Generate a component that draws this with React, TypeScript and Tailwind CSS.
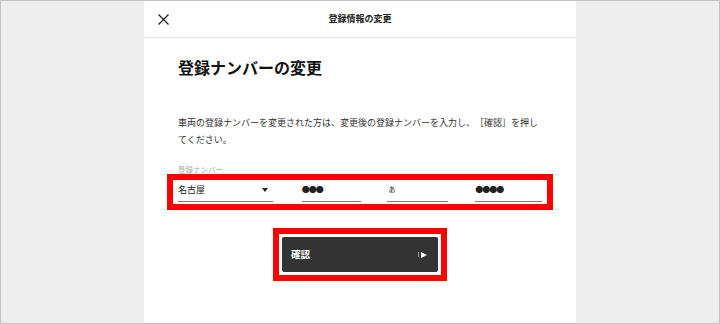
import React, { useState } from 'react';

const font = { fontFamily: '"Noto Sans CJK JP", "Noto Sans", sans-serif' };

const ChangePlate: React.FC = () => {
  const [area] = useState('名古屋');

  return (
    <div
      className="w-[720px] h-[324px] border border-[#c2c2c2] bg-[#eeeeee] flex justify-center overflow-hidden"
      style={font}
    >
      <div className="w-[432px] h-full bg-white flex flex-col">
        {/* header */}
        <div className="h-[37px] shrink-0 border-b border-[#e3e3e3] flex items-center relative">
          <button className="ml-[13px] w-[12px] h-[12px] flex items-center justify-center text-[#222]">
            <svg width="11" height="11" viewBox="0 0 11 11" fill="none" stroke="currentColor" strokeWidth="1.3">
              <path d="M0.5 0.5 L10.5 10.5 M10.5 0.5 L0.5 10.5" />
            </svg>
          </button>
          <div className="flex-1 text-center text-[9px] font-bold text-[#222] -ml-[25px]">登録情報の変更</div>
        </div>

        {/* body */}
        <div className="px-[34px] flex flex-col">
          <h1 className="mt-[18px] text-[16px] leading-[22px] font-bold text-[#111]">登録ナンバーの変更</h1>
          <p className="mt-[36px] text-[9px] leading-[17px] text-[#333] [text-spacing-trim:space-all]">
            車両の登録ナンバーを変更された方は、変更後の登録ナンバーを入力し、［確認］を押してください。
          </p>

          <div className="mt-[17px] text-[7.5px] leading-[10px] text-[#aaa]">登録ナンバー</div>

          <div className="relative mt-[3px]">
            <div className="flex items-end h-[24px] text-[#222]">
              <div className="w-[95px] h-full border-b border-[#777] flex items-center justify-between pr-[5px]">
                <span className="text-[9px] leading-none">{area}</span>
                <svg width="6" height="4" viewBox="0 0 6 4">
                  <path d="M0 0 H6 L3 4 Z" fill="#222" />
                </svg>
              </div>
              <div className="ml-[29px] w-[60px] h-full border-b border-[#777] flex items-center">
                <span className="text-[8px] leading-none tracking-[-1px]">●●●</span>
              </div>
              <div className="ml-[26px] w-[61px] h-full border-b border-[#777] flex items-center pl-[1px]">
                <span className="text-[7px] leading-none">あ</span>
              </div>
              <div className="ml-[27px] w-[67px] h-full border-b border-[#777] flex items-center">
                <span className="text-[8px] leading-none tracking-[-1px]">●●●●</span>
              </div>
            </div>
            {/* annotation frame */}
            <div className="absolute left-[-11px] right-[-11px] top-[-4px] bottom-[-8px] border-[6px] border-[#ff0000] pointer-events-none" />
          </div>

          <div className="flex justify-center mt-[26px]">
            <div className="border-[6px] border-[#ff0000] p-[3px]">
              <button className="w-[156px] h-[35px] bg-[#333333] rounded-[2px] flex items-center justify-between px-[9px] text-white">
                <span className="text-[9.5px] font-bold">確認</span>
                <span className="flex items-center gap-[2px] mr-[2px]">
                  <span className="w-[1px] h-[5px] bg-[#999]" />
                  <svg width="6" height="6" viewBox="0 0 6 6">
                    <path d="M0 0 L6 3 L0 6 Z" fill="#fff" />
                  </svg>
                </span>
              </button>
            </div>
          </div>
        </div>
      </div>
    </div>
  );
};

export default function App() {
  return <ChangePlate />;
}
